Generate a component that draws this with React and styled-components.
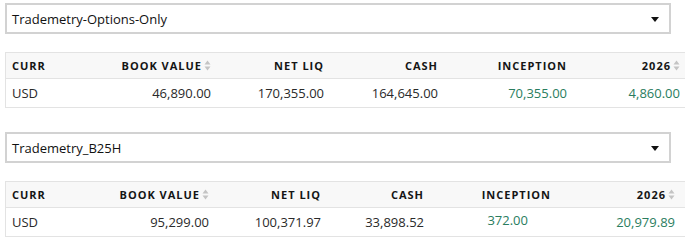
import styled, { createGlobalStyle } from "styled-components";

const GlobalStyle = createGlobalStyle`
  body {
    margin: 0;
    background: #ffffff;
    font-family: "Open Sans", "Liberation Sans", sans-serif;
    overflow: hidden;
  }
`;

const accounts = [
  {
    name: "Trademetry-Options-Only",
    cols: "100px 111px 113px 114px 129px 1fr",
    edge: 6,
    values: ["USD", "46,890.00", "170,355.00", "164,645.00", "70,355.00", "4,860.00"],
    inceptionShift: 0,
  },
  {
    name: "Trademetry_B25H",
    cols: "100px 109px 112px 103px 127px 1fr",
    edge: 11,
    values: ["USD", "95,299.00", "100,371.97", "33,898.52", "372.00", "20,979.89"],
    inceptionShift: 23,
  },
];

const headers = [
  { label: "CURR", align: "left" },
  { label: "BOOK VALUE", sort: true },
  { label: "NET LIQ" },
  { label: "CASH" },
  { label: "INCEPTION" },
  { label: "2026", sort: true },
];

const App = () => {
  return (
    <Page>
      <GlobalStyle />
      {accounts.map((account) => (
        <Block key={account.name}>
          <Select>
            <span>{account.name}</span>
            <Caret />
          </Select>
          <Table $cols={account.cols}>
            {headers.map((h, i) => (
              <HeadCell key={h.label} $align={h.align} $edge={i === 5 ? account.edge : 6}>
                {h.label}
                {h.sort && <SortIcon />}
              </HeadCell>
            ))}
            {account.values.map((v, i) => (
              <Cell
                key={i}
                $align={i === 0 ? "left" : "right"}
                $green={i >= 4}
                $edge={i === 5 ? account.edge : i === 4 ? 6 + account.inceptionShift : 6}
                $raise={i === 4 && account.inceptionShift > 0}
              >
                {v}
              </Cell>
            ))}
          </Table>
        </Block>
      ))}
    </Page>
  );
};

const SortIcon = () => (
  <SortSvg width="7" height="11" viewBox="0 0 7 11">
    <path d="M3.5 0.5 L6.5 4.5 L0.5 4.5 Z" fill="#c4c4c4" />
    <path d="M3.5 10.5 L6.5 6.5 L0.5 6.5 Z" fill="#c4c4c4" />
  </SortSvg>
);

const Page = styled.div`
  display: flex;
  flex-direction: column;
  gap: 24px;
  padding: 3px 0 0 5px;
`;

const Block = styled.div`
  display: flex;
  flex-direction: column;
  gap: 18px;
`;

const Select = styled.div`
  box-sizing: border-box;
  width: 666px;
  height: 31px;
  border: 2px solid #d2d2d2;
  display: flex;
  align-items: center;
  justify-content: space-between;
  padding: 0 10px 0 5px;
  font-size: 13px;
  color: #111111;
`;

const Caret = styled.span`
  width: 0;
  height: 0;
  border-left: 4px solid transparent;
  border-right: 4px solid transparent;
  border-top: 5px solid #111111;
  margin-top: 1px;
`;

const Table = styled.div`
  display: grid;
  grid-template-columns: ${(p) => p.$cols};
  width: 680px;
  border-top: 1px solid #e3e3e3;
  border-left: 1px solid #e3e3e3;
`;

const HeadCell = styled.div`
  box-sizing: border-box;
  height: 26px;
  display: flex;
  align-items: center;
  justify-content: ${(p) => (p.$align === "left" ? "flex-start" : "flex-end")};
  padding: 0 ${(p) => p.$edge}px 1px 6px;
  background: #f8f8f8;
  border-bottom: 1px solid #e3e3e3;
  font-size: 11px;
  font-weight: 700;
  letter-spacing: 1px;
  color: #151515;
  white-space: nowrap;
`;

const SortSvg = styled.svg`
  margin-left: 2px;
  flex-shrink: 0;
`;

const Cell = styled.div`
  box-sizing: border-box;
  height: 29px;
  display: flex;
  align-items: center;
  justify-content: ${(p) => (p.$align === "left" ? "flex-start" : "flex-end")};
  padding: 0 ${(p) => p.$edge}px ${(p) => (p.$raise ? 5 : 1)}px 6px;
  border-bottom: 1px solid #e3e3e3;
  font-size: 13px;
  color: ${(p) => (p.$green ? "#2a7d5e" : "#2a2a2a")};
  white-space: nowrap;
`;

export default App;
